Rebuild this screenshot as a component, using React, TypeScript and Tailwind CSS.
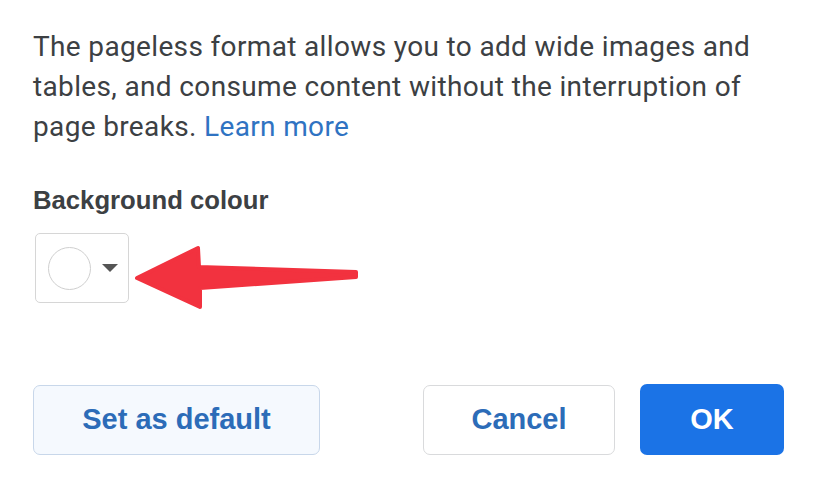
import React from "react";

export default function App() {
  return (
    <div className="relative w-[832px] h-[500px] bg-white overflow-hidden pl-[33px]">
      <p
        className="pt-[27px] text-[28px] leading-[40px] tracking-[0.35px] text-[#3c4043]"
        style={{ fontFamily: "Roboto, sans-serif" }}
      >
        The pageless format allows you to add wide images and
        <br />
        tables, and consume content without the interruption of
        <br />
        page breaks. <span className="text-[#2f73c2]">Learn more</span>
      </p>
      <h2
        className="mt-[37px] text-[25.7px] leading-[32px] font-bold text-[#3c4043]"
        style={{ fontFamily: '"Liberation Sans", Arial, sans-serif' }}
      >
        Background colour
      </h2>
      <div className="mt-[17px] ml-[2px] w-[94px] h-[70px] rounded-[5px] border border-[#d6d6d6] flex items-center pl-[12px]">
        <div className="w-[43px] h-[43px] rounded-full border border-[#cfcfcf]" />
        <div className="ml-[11px] w-0 h-0 border-l-[8px] border-r-[8px] border-t-[8px] border-l-transparent border-r-transparent border-t-[#555]" />
      </div>
      <div
        className="mt-[81px] flex items-center font-bold text-[29px]"
        style={{ fontFamily: '"Liberation Sans", Arial, sans-serif' }}
      >
        <button className="w-[287px] h-[70px] rounded-[7px] border border-[#c8d7ea] bg-[#f5f9fe] text-[#2c6cb8]">
          Set as default
        </button>
        <button className="ml-[103px] w-[192px] h-[70px] rounded-[7px] border border-[#d9dadc] bg-white text-[#2c6cb8]">
          Cancel
        </button>
        <button className="ml-[25px] w-[144px] h-[71px] rounded-[7px] bg-[#1b73e6] text-white">
          OK
        </button>
      </div>
      <svg
        className="absolute left-0 top-0"
        width="832"
        height="500"
        viewBox="0 0 832 500"
      >
        <polygon
          points="137,278 198,248 199,267 356,272 356,277 200,288 200,307"
          fill="#f2323f"
          stroke="#f2323f"
          strokeWidth="4"
          strokeLinejoin="round"
        />
      </svg>
    </div>
  );
}
